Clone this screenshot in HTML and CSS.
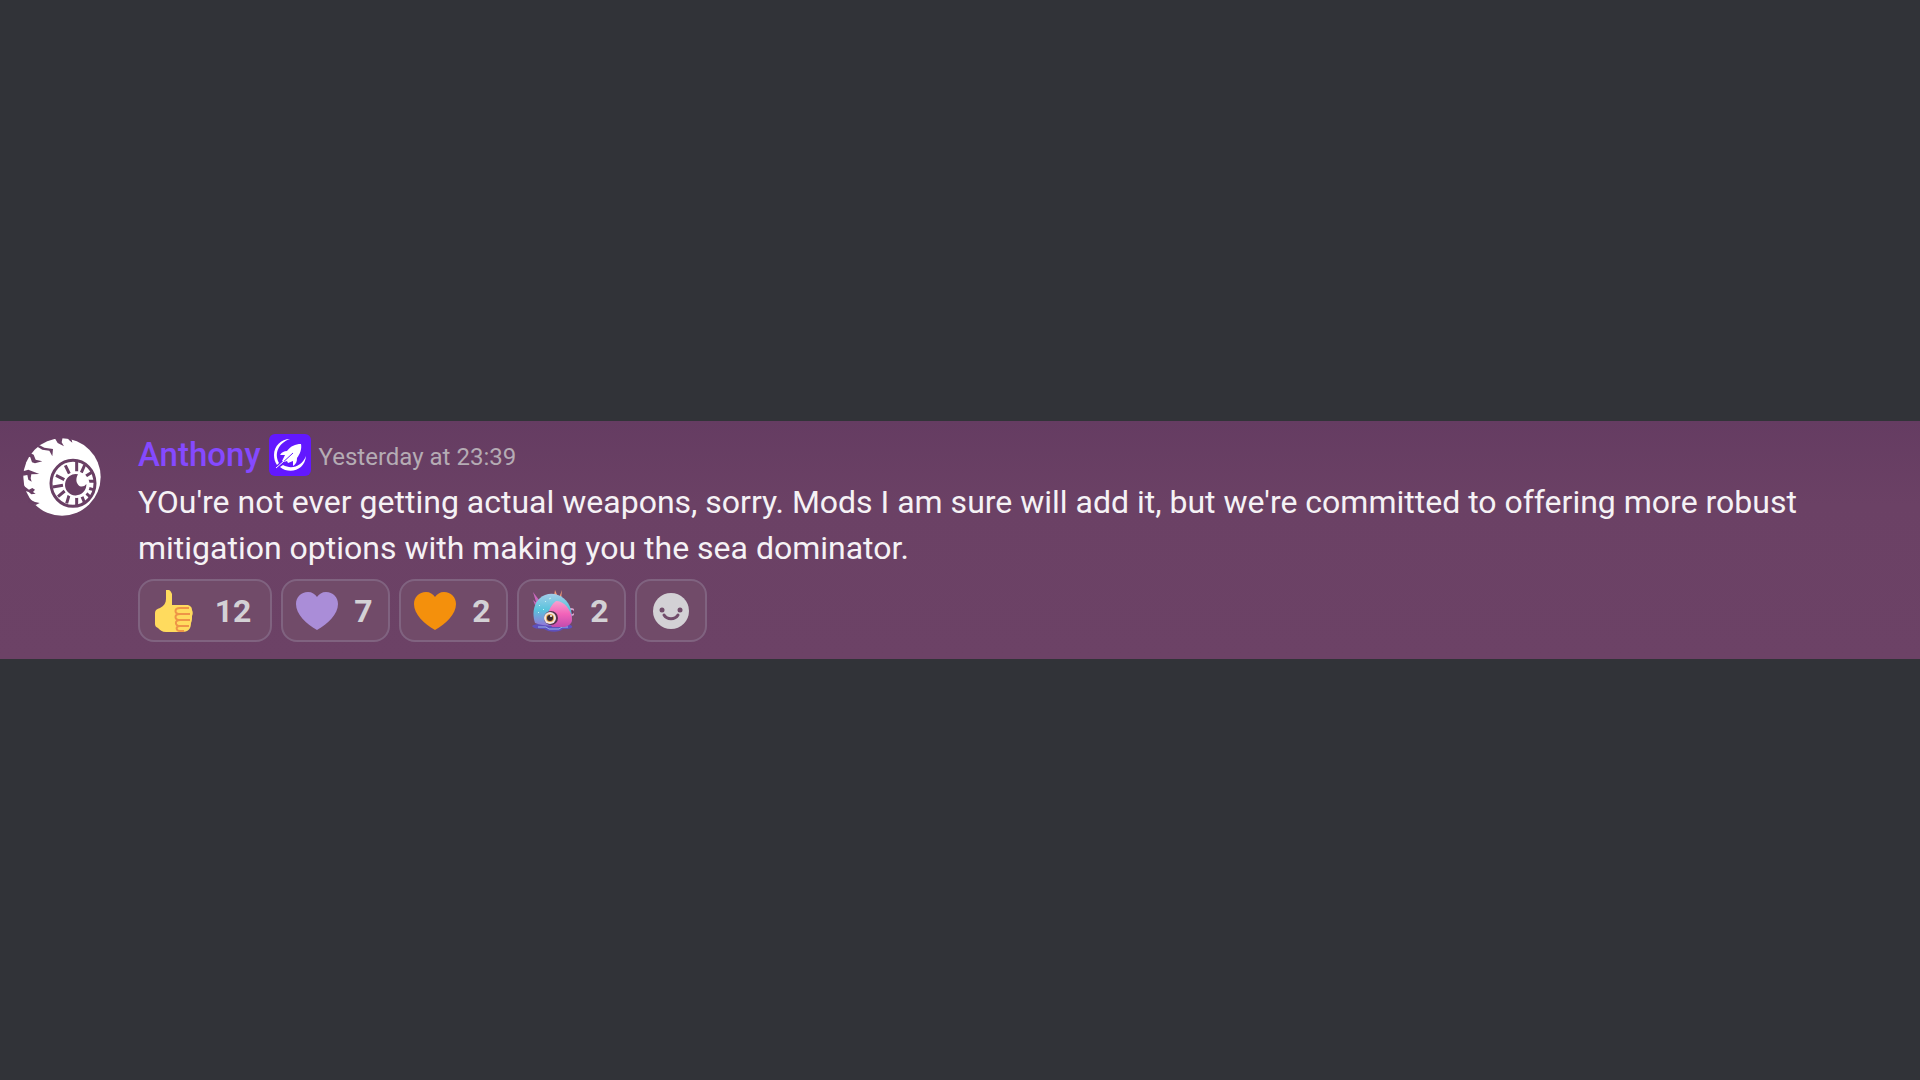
FILE: index.html
```
<!DOCTYPE html>
<html lang="en">
  <head>
    <meta charset="UTF-8" />
    <meta name="viewport" content="width=device-width, initial-scale=1.0" />
    <title>Message</title>
    <link rel="stylesheet" href="styles.css">
  </head>
  <body>
    <main>
      <article class="message">
        <!-- Avatar -->
        <svg class="avatar" viewBox="68 70 234 234" role="img" aria-label="Anthony's avatar">
          <circle cx="185" cy="187" r="116" fill="#fff" />
          <!-- tire treads -->
          <g fill="#693f64">
            <path d="M162 68l10 17 19 10-7-12 3-15zM200 68l6 8 10 8-3-14zM118 92l14 7 26 4-2 22-9-17-21-3-15-9zM88 114l12 6 6 15 20 5-22 6-9-3-5-15-10-4zM66 170l18-5 33 13-24 1-2 12 3 10-10-6-3-14-12 2zM68 212l18 13 10-5 8 5-6 7 8 5-13 2-8-7-20-6zM84 252l20 10 14 3-12 6-22-8z" />
          </g>
          <!-- iris -->
          <ellipse cx="218" cy="206" rx="66" ry="69" fill="#fff" stroke="#693f64" stroke-width="9" />
          <g stroke="#693f64" stroke-width="9">
            <path d="M229 142v28M253 151l-10 23M276 172l-19 12M282 200h-20M280 225l-20-5M270 247l-18-16M253 265l-10-24M229 272v-28M199 266l7-24M173 246l20-17M157 217l31-5M167 182l25 13M195 152l12 25" />
          </g>
          <circle cx="229" cy="211" r="39" fill="#fff" />
          <path d="M233 179a32 32 0 1 0 25 29c-6 9-18 10-24 3-7-8-8-19-1-32z" fill="#693f64" />
        </svg>

        <div class="message-body">
          <!-- Message Header -->
          <header class="message-header">
            <h1 class="username">Anthony</h1>
            <svg class="role-icon" viewBox="0 0 42 42" role="img" aria-label="Role">
              <rect width="42" height="42" rx="6" fill="#6218ff" />
              <!-- orbit -->
              <path d="M21 5C12 5 5 12 5 21c0 4 1 7 3 10l2-2C5 20 9 9 21 5z" fill="#fff" />
              <path d="M11 33c10 8 25 3 26-11-4 10-14 14-23 9z" fill="#fff" />
              <!-- rocket -->
              <path d="M32 10c-6 0-10 2-14 7-3 0-5 1-7 4l5 0-3 6 2 1 3-1 1 2 5-2 0 5c3-2 4-4 4-8 3-4 5-9 4-14z" fill="#fff" />
              <path d="M11 31l13-12" stroke="#6218ff" stroke-width="1" />
              <path d="M7 34l8-7" stroke="#fff" stroke-width="1" />
            </svg>
            <time class="timestamp">Yesterday at 23:39</time>
          </header>

          <p class="message-text">YOu're not ever getting actual weapons, sorry. Mods I am sure will add it, but we're committed to offering more robust mitigation options with making you the sea dominator.</p>

          <!-- Reactions -->
          <div class="reactions">
            <button class="reaction" type="button" aria-label="Thumbs up, 12 reactions">
              <svg class="emoji" viewBox="0 0 42 42">
                <path d="M13 0c3-1 5 1 6 4v11h14c4 0 6 2 6 5 1 2 1 4 0 6 0 3 0 5-1 7 0 6-3 9-9 9H13c-4 0-6-2-8-4-2-1-3-2-3-4V23c0-3 2-4 5-5 4-2 6-5 6-9z" fill="#ffdb5e" />
                <path d="M36 18H27c-6 0-6 6 0 6h10M27 24c-6 0-6 6 0 6h10M27 30c-6 0-5 6 0 6h9M27 36c-5 0-4 5 0 5h4" fill="none" stroke="#ee9547" stroke-width="2" />
              </svg>
              <span class="count count-wide">12</span>
            </button>
            <button class="reaction" type="button" aria-label="Purple heart, 7 reactions">
              <svg class="emoji" viewBox="0 0 42 42">
                <path d="M21 40C10 34 0 24 0 14 0 7 5 2 12 2c4 0 7 2 9 5 2-3 5-5 9-5 7 0 12 5 12 12 0 10-10 20-21 26z" fill="#aa8dd8" />
              </svg>
              <span class="count">7</span>
            </button>
            <button class="reaction" type="button" aria-label="Orange heart, 2 reactions">
              <svg class="emoji" viewBox="0 0 42 42">
                <path d="M21 40C10 34 0 24 0 14 0 7 5 2 12 2c4 0 7 2 9 5 2-3 5-5 9-5 7 0 12 5 12 12 0 10-10 20-21 26z" fill="#f4900c" />
              </svg>
              <span class="count">2</span>
            </button>
            <button class="reaction" type="button" aria-label="Sea creature, 2 reactions">
              <svg class="emoji" viewBox="0 0 42 42">
                <defs>
                  <linearGradient id="shell" x1="0" y1="0" x2="0" y2="1">
                    <stop offset="0" stop-color="#a3cdea" />
                    <stop offset=".5" stop-color="#58c4dc" />
                    <stop offset="1" stop-color="#9277d8" />
                  </linearGradient>
                  <linearGradient id="face" x1="0" y1="0" x2="0" y2="1">
                    <stop offset="0" stop-color="#f6a2cf" />
                    <stop offset=".5" stop-color="#f263b9" />
                    <stop offset="1" stop-color="#c34cae" />
                  </linearGradient>
                </defs>
                <path d="M5 15L1 2l6 8 2 4zM3 15l-2-5 6 5z" fill="#c968bd" />
                <path d="M22 6l1-6 3 7zM27 8l3-8-1 9z" fill="#f19b78" />
                <path d="M0 36c4-3 10-2 18-1 10-2 18-2 22 1 1 3-5 3-9 3-4 4-15 3-19 0-5 0-10 0-12-3z" fill="#5e50bd" />
                <path d="M6 37h8l3 2h10l3-2h6" fill="none" stroke="#9bb5ef" stroke-width="1" />
                <circle cx="39" cy="22" r="4" fill="#d4a0c7" />
                <circle cx="40" cy="22" r="2" fill="#653657" />
                <path d="M3 33C-1 21 3 9 13 5c11-4 23 3 26 15 1 4 1 8 0 13-10 3-26 4-36 0z" fill="url(#shell)" />
                <path d="M24 11c8 0 15 8 16 18 0 4-2 6-7 8H20c-6-8-5-19 4-26z" fill="url(#face)" />
                <path d="M7 16l1-1M13 12l1-1M6 23l1-1M17 9l2-1M11 20l1-1" stroke="#c3f5f3" />
                <circle cx="19" cy="28" r="7" fill="#54344f" />
                <circle cx="18" cy="28" r="6" fill="#f7e6e0" />
                <circle cx="18" cy="28" r="4" fill="#dfa34d" />
                <circle cx="18" cy="28" r="3" fill="#38272e" />
                <circle cx="19" cy="26" r="1" fill="#fff" />
              </svg>
              <span class="count">2</span>
            </button>
            <button class="reaction" type="button" aria-label="Add reaction">
              <svg class="emoji" viewBox="0 0 42 42">
                <circle cx="21" cy="21" r="18" fill="#d3d1d5" />
                <circle cx="12" cy="20" r="2.5" fill="#714c6a" />
                <circle cx="30" cy="20" r="2.5" fill="#714c6a" />
                <path d="M14 25c3 5 11 5 14 0" fill="none" stroke="#714c6a" stroke-width="3" stroke-linecap="round" />
              </svg>
            </button>
          </div>
        </div>
      </article>
    </main>
  </body>
</html>
```

FILE: styles.css
```
body {
  font-family: Roboto, "Open Sans", sans-serif;
  background-color: #313338;
  margin: 0;
  min-height: 100vh;
  display: flex;
  flex-direction: column;
  justify-content: center;
}

.message {
  display: flex;
  gap: 37px;
  padding: 13px 48px 17px 23px;
  background: linear-gradient(#653c62, #6b4165 35%, #6c4266);
}

.avatar {
  flex: none;
  width: 78px;
  height: 78px;
  margin-top: 4px;
}

.message-body {
  flex: 1;
}

/* Header */
.message-header {
  display: flex;
  align-items: center;
  gap: 8px;
  height: 42px;
}

.username {
  margin: 0;
  font-size: 33px;
  font-weight: 500;
  line-height: 42px;
  color: #8549ff;
}

.role-icon {
  width: 42px;
  height: 42px;
}

.timestamp {
  font-size: 24px;
  line-height: 42px;
  padding-top: 4px;
  color: #b5acb4;
}

.message-text {
  margin: 3px 0 8px;
  font-size: 32px;
  line-height: 46px;
  color: #f5f2f5;
}

/* Reactions */
.reactions {
  display: flex;
  flex-wrap: wrap;
  gap: 9px;
}

.reaction {
  display: flex;
  align-items: center;
  gap: 14px;
  box-sizing: border-box;
  height: 63px;
  padding: 0 13px;
  border: 2px solid #806380;
  border-radius: 16px;
  background-color: #714b69;
  color: #d3d1d5;
  font-family: inherit;
  font-size: 32px;
  font-weight: 700;
  cursor: pointer;
}

.reaction:hover {
  background-color: #7a5573;
}

.emoji {
  width: 42px;
  height: 42px;
}

.count {
  min-width: 23px;
  text-align: center;
}

.count-wide {
  min-width: 48px;
}
```
